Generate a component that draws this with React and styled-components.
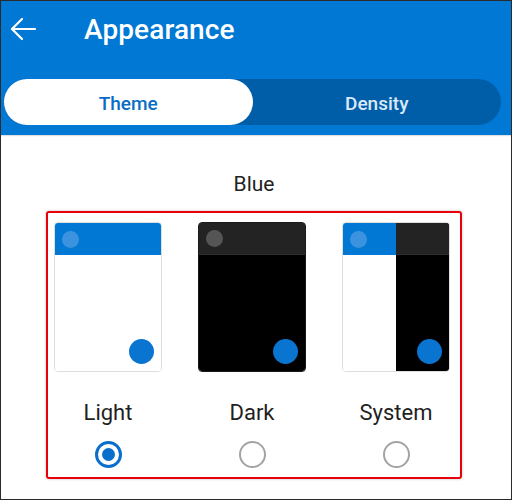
import React from 'react';
import styled, { createGlobalStyle } from 'styled-components';

const GlobalStyle = createGlobalStyle`
  html, body {
    margin: 0;
    padding: 0;
    background: #ffffff;
  }
  body {
    font-family: Roboto, "Noto Sans", Arial, sans-serif;
  }
`;

const Screen = styled.div`
  box-sizing: border-box;
  width: 512px;
  height: 500px;
  border: 1px solid #2b2b2b;
  background: #ffffff;
  overflow: hidden;
`;

const Header = styled.header`
  background: #0078d4;
  height: 134px;
  padding: 0 10px 0 3px;
  box-sizing: border-box;
  box-shadow: 0 1px 1px rgba(0, 0, 0, 0.12);
  display: flex;
  flex-direction: column;
`;

const TitleRow = styled.div`
  display: flex;
  align-items: center;
  height: 56px;
  padding-left: 5px;
`;

const BackButton = styled.button`
  border: 0;
  background: none;
  padding: 0;
  width: 28px;
  height: 28px;
  display: flex;
  align-items: center;
  justify-content: center;
  margin-right: 47px;
  cursor: pointer;
`;

const Title = styled.h1`
  margin: 0;
  color: #ffffff;
  font-size: 28px;
  font-weight: 500;
  letter-spacing: 0.1px;
`;

const Tabs = styled.div`
  margin-top: 22px;
  display: flex;
  height: 46px;
  border-radius: 23px;
  background: #005ea9;
`;

const Tab = styled.button`
  flex: 1;
  border: 0;
  border-radius: 23px;
  padding-top: 3px;
  font-family: inherit;
  font-size: 19px;
  font-weight: 500;
  background: ${(p) => (p.$active ? '#ffffff' : 'transparent')};
  color: ${(p) => (p.$active ? '#0a6cc4' : '#dbe9f7')};
  cursor: pointer;
`;

const Content = styled.main`
  display: flex;
  flex-direction: column;
  align-items: center;
  padding-top: 37px;
  padding-right: 4px;
`;

const Accent = styled.div`
  font-size: 21px;
  color: #222222;
  margin-bottom: 15px;
`;

const Options = styled.div`
  display: grid;
  grid-template-columns: repeat(3, 108px);
  column-gap: 36px;
  padding: 9px 10px 0 6px;
  height: 268px;
  box-sizing: border-box;
  border: 2px solid #e8000b;
  border-radius: 3px;
  box-shadow: 0 0 2px 1px rgba(0, 0, 0, 0.12);
`;

const Option = styled.label`
  display: flex;
  flex-direction: column;
  align-items: center;
  cursor: pointer;
`;

const Preview = styled.div`
  position: relative;
  width: 108px;
  height: 150px;
  box-sizing: border-box;
  border-radius: 4px;
  overflow: hidden;
  border: 1px solid ${(p) => (p.$mode === 'dark' ? '#1a1a1a' : '#dedede')};
  display: flex;
`;

const Half = styled.div`
  flex: 1;
  display: flex;
  flex-direction: column;
  background: ${(p) => (p.$dark ? '#000000' : '#ffffff')};
`;

const Band = styled.div`
  height: 32px;
  display: flex;
  align-items: center;
  padding-left: 7px;
  background: ${(p) => (p.$dark ? '#232323' : '#0078d4')};
  border-bottom: ${(p) => (p.$dark ? '1px solid #2e2e2e' : '0')};
  box-sizing: border-box;
`;

const Dot = styled.span`
  width: 17px;
  height: 17px;
  border-radius: 50%;
  background: ${(p) => (p.$dark ? '#555555' : '#3b93e0')};
`;

const Fab = styled.span`
  position: absolute;
  right: 7px;
  bottom: 7px;
  width: 25px;
  height: 25px;
  border-radius: 50%;
  background: #0a74d1;
`;

const Label = styled.span`
  margin-top: 28px;
  font-size: 22px;
  color: #1f1f1f;
`;

const Radio = styled.span`
  margin-top: 16px;
  width: 27px;
  height: 27px;
  box-sizing: border-box;
  border-radius: 50%;
  border: ${(p) => (p.$checked ? '3px solid #0a6fcc' : '2.5px solid #a3a3a3')};
  display: flex;
  align-items: center;
  justify-content: center;

  &::after {
    content: '';
    width: 13px;
    height: 13px;
    border-radius: 50%;
    background: ${(p) => (p.$checked ? '#0a6fcc' : 'transparent')};
  }
`;

const BackArrow = () => (
  <svg width="27" height="24" viewBox="0 0 27 24" fill="none" stroke="#ffffff" strokeWidth="2.2" strokeLinecap="round" strokeLinejoin="round">
    <path d="M25 12H2" />
    <path d="M12 2L2 12l10 10" />
  </svg>
);

const themes = [
  { id: 'light', label: 'Light' },
  { id: 'dark', label: 'Dark' },
  { id: 'system', label: 'System' },
];

const ThemePreview = ({ mode }) => (
  <Preview $mode={mode}>
    {mode === 'system' ? (
      <>
        <Half>
          <Band><Dot /></Band>
        </Half>
        <Half $dark>
          <Band $dark />
        </Half>
      </>
    ) : (
      <Half $dark={mode === 'dark'}>
        <Band $dark={mode === 'dark'}>
          <Dot $dark={mode === 'dark'} />
        </Band>
      </Half>
    )}
    <Fab />
  </Preview>
);

export default function App() {
  const [selected, setSelected] = React.useState('light');

  return (
    <>
      <GlobalStyle />
      <Screen>
        <Header>
          <TitleRow>
            <BackButton aria-label="Back">
              <BackArrow />
            </BackButton>
            <Title>Appearance</Title>
          </TitleRow>
          <Tabs>
            <Tab $active>Theme</Tab>
            <Tab>Density</Tab>
          </Tabs>
        </Header>
        <Content>
          <Accent>Blue</Accent>
          <Options>
            {themes.map((t) => (
              <Option key={t.id} onClick={() => setSelected(t.id)}>
                <ThemePreview mode={t.id} />
                <Label>{t.label}</Label>
                <Radio $checked={selected === t.id} />
              </Option>
            ))}
          </Options>
        </Content>
      </Screen>
    </>
  );
}
